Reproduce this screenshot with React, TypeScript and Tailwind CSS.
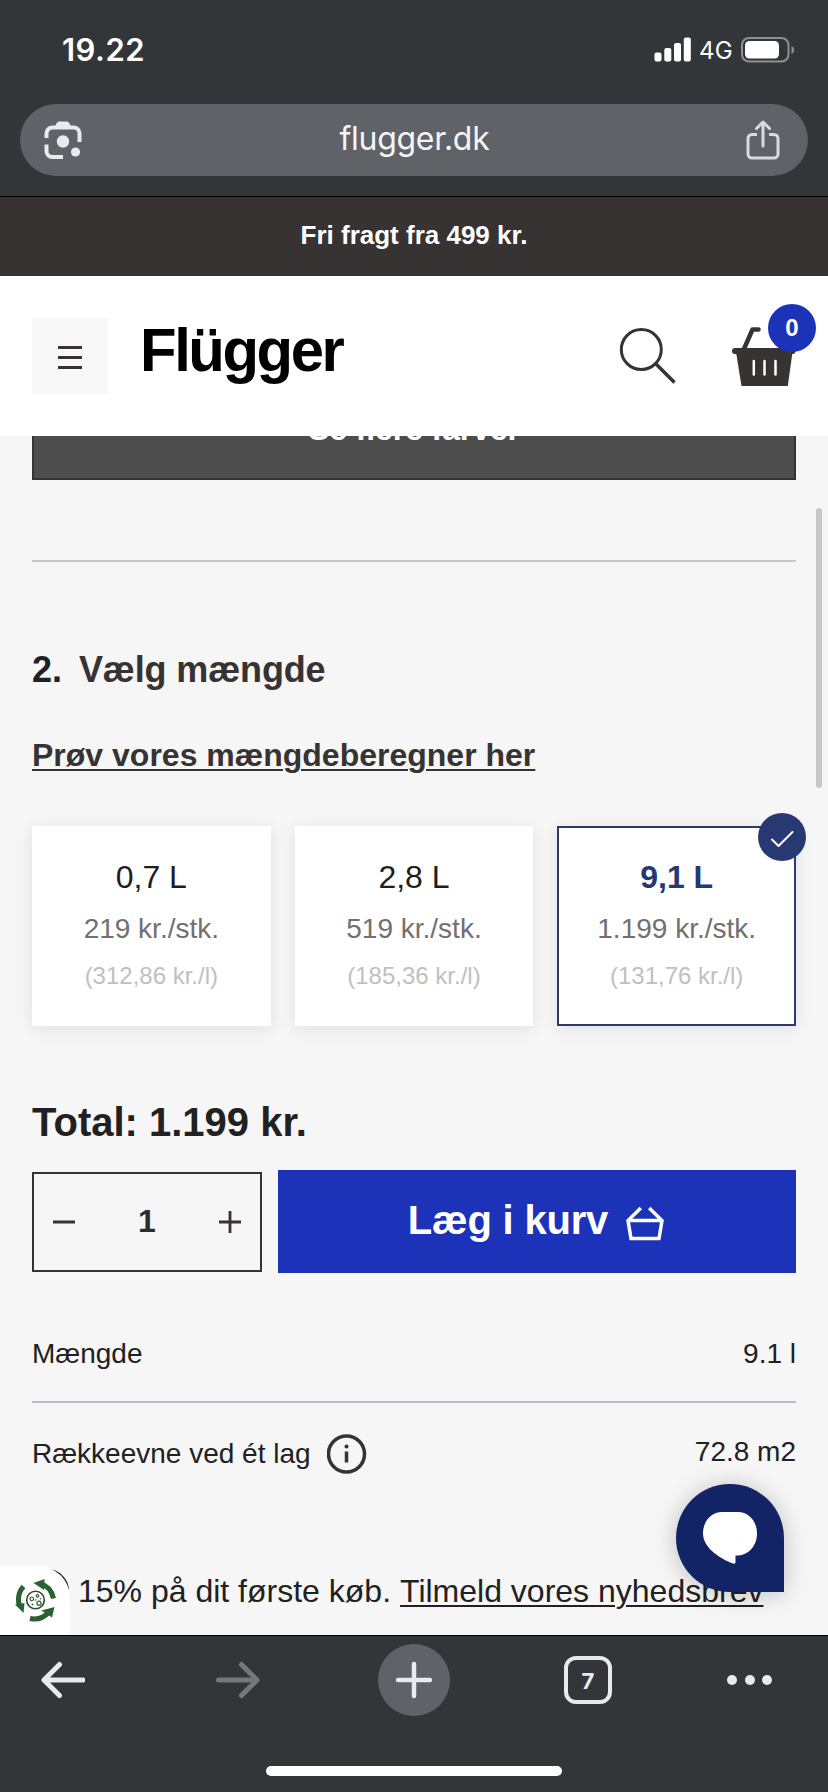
const helv = "font-['Liberation_Sans',Arial,sans-serif]";
const inter = "font-['Inter',sans-serif]";

function StatusBar() {
  return (
    <div className={`flex h-[100px] items-center justify-between pr-[33px] pl-[62px] text-white ${inter}`}>
      <span className="text-[31px] font-semibold tracking-[0.48px]">19.22</span>
      <div className="flex items-center">
        <svg width="38" height="26" viewBox="0 0 38 26" fill="currentColor">
          <rect x="0.5" y="15.5" width="7" height="9" rx="2" />
          <rect x="10.3" y="11" width="7" height="13.5" rx="2" />
          <rect x="20" y="6" width="7" height="18.5" rx="2" />
          <rect x="29.8" y="0.5" width="7" height="24" rx="2" />
        </svg>
        <span className="ml-[7px] pt-[2px] text-[24px] font-normal tracking-[0.35px]">4G</span>
        <svg className="ml-[8px]" width="54" height="26" viewBox="0 0 54 26">
          <rect x="1" y="1" width="46.5" height="23.5" rx="7" fill="none" stroke="#8d9092" strokeWidth="2" />
          <rect x="4" y="4" width="34" height="17.5" rx="4.5" fill="#fff" />
          <path d="M50.5 9c3.4 1.2 3.4 6.800 0 8z" fill="#8d9092" />
        </svg>
      </div>
    </div>
  );
}

function AddressBar() {
  return (
    <div className="mx-5 mt-[4px] flex h-[72px] items-center justify-between rounded-full bg-[#5f6368] pr-[27px] pl-[22px]">
      <svg width="42" height="42" viewBox="0 0 42 42" fill="none" stroke="#e8eaed" strokeWidth="4">
        <path d="M4.500 19v-4.500a6 6 0 0 1 6-6h21a6 6 0 0 1 6 6V23" />
        <path d="M4.500 25.500V32a6 6 0 0 0 6 6H21" />
        <path d="M12.500 8.500l2.200-4.500q.8-1.500 2.500-1.500h7.600q1.700 0 2.500 1.500l2.200 4.500z" fill="#e8eaed" stroke="none" />
        <circle cx="21" cy="22.500" r="6.200" fill="#e8eaed" stroke="none" />
        <circle cx="33.500" cy="33" r="4.600" fill="#e8eaed" stroke="none" />
      </svg>
      <span className={`pb-[2px] text-[32px] leading-[40px] tracking-[-0.3px] text-[#f4f5f6] ${inter}`}>flugger.dk</span>
      <svg width="36" height="42" viewBox="0 0 36 42" fill="none" stroke="#d9dbde" strokeWidth="3">
        <path d="M12 15.500H7a4 4 0 0 0-4 4V35a4 4 0 0 0 4 4h22a4 4 0 0 0 4-4V19.500a4 4 0 0 0-4-4h-5" />
        <path d="M18 27V3.500M11.500 9.500l6.500-6.500 6.500 6.500" strokeLinecap="round" strokeLinejoin="round" />
      </svg>
    </div>
  );
}

function SiteHeader() {
  return (
    <header className="flex h-[160px] shrink-0 items-center bg-white pl-8">
      <div className="flex size-[76px] items-center justify-center bg-[#f8f8f8] pt-[3px]">
        <div className="flex w-6 flex-col gap-[7px]">
          <div className="h-[3px] bg-[#373333]" />
          <div className="h-[3px] bg-[#373333]" />
          <div className="h-[3px] bg-[#373333]" />
        </div>
      </div>
      <div className="ml-[32px] w-[210px] origin-left scale-x-[0.965] pb-[12px] text-[62px] leading-[72px] font-bold tracking-[-2.5px] text-black">Flügger</div>
      <svg className="ml-[268px]" width="60" height="80" viewBox="0 0 60 80" fill="none" stroke="#373333">
        <circle cx="23.300" cy="33.500" r="20" strokeWidth="3" />
        <path d="M38 48L56.500 66.500" strokeWidth="3.500" />
      </svg>
      <div className="relative ml-[50px] h-[80px] w-[90px]">
        <svg width="72" height="80" viewBox="0 0 72 80" fill="none">
          <path d="M15.500 34l9-20.500H30.500" stroke="#373333" strokeWidth="4.500" strokeLinecap="round" strokeLinejoin="round" />
          <rect x="4" y="32" width="63.500" height="6" rx="3" fill="#373333" />
          <path d="M8 36h56.500L59.800 70H13.500z" fill="#373333" />
          <path d="M25.800 45v13.500M36.500 45v13.500M47.500 45v13.500" stroke="#fff" strokeWidth="2.500" strokeLinecap="round" />
        </svg>
        <div className="absolute top-[-12px] left-[40px] flex size-12 items-center justify-center rounded-full bg-[#1c32b9] text-[24px] font-bold text-white">0</div>
      </div>
    </header>
  );
}

const sizes = [
  { size: '0,7 L', price: '219 kr./stk.', unit: '(312,86 kr./l)', selected: false },
  { size: '2,8 L', price: '519 kr./stk.', unit: '(185,36 kr./l)', selected: false },
  { size: '9,1 L', price: '1.199 kr./stk.', unit: '(131,76 kr./l)', selected: true },
];

function SizeCards() {
  return (
    <div className="mt-[51px] grid grid-cols-3 gap-6">
      {sizes.map((s) => (
        <div
          key={s.size}
          className={`relative flex h-[200px] flex-col items-center bg-white pt-[31px] shadow-[0_3px_16px_rgba(0,0,0,0.09)] ${
            s.selected ? 'outline-2 -outline-offset-2 outline-[#2b3a6b]' : ''
          }`}
        >
          <div className={`text-[32px] leading-[40px] ${s.selected ? 'font-bold text-[#263774]' : 'text-[#1e1e1e]'}`}>{s.size}</div>
          <div className="mt-[16px] text-[28px] leading-8 text-[#727070]">{s.price}</div>
          <div className="mt-[15px] text-[24px] leading-8 text-[#c0c0c0]">{s.unit}</div>
          {s.selected && (
            <div className="absolute -top-[13px] -right-[10px] flex size-12 items-center justify-center rounded-full bg-[#283872]">
              <svg width="24" height="18" viewBox="0 0 24 18" className="mt-[4px]" fill="none" stroke="#fff" strokeWidth="2" strokeLinecap="round" strokeLinejoin="round">
                <path d="M2 9.500L8.500 16 22.500 2" />
              </svg>
            </div>
          )}
        </div>
      ))}
    </div>
  );
}

function BuyRow() {
  return (
    <div className="mt-6 flex h-[103px] items-center gap-4">
      <div className="flex h-[100px] w-[230px] items-center justify-between border-2 border-[#373333] px-[18px]">
        <svg width="24" height="24" stroke="#373333" strokeWidth="3"><path d="M1 12h22" /></svg>
        <span className="pb-[2px] text-[32px] font-bold text-[#2d2b2b]">1</span>
        <svg width="24" height="24" stroke="#373333" strokeWidth="2.800"><path d="M1 12h22M12 1v22" /></svg>
      </div>
      <button className="flex h-full flex-1 items-center justify-center bg-[#1c32b9] text-white">
        <span className="-mt-[3px] text-[40px] leading-[48px] font-bold tracking-[-0.2px]">Læg i kurv</span>
        <svg className="mr-[1px] ml-[17px]" width="40" height="40" viewBox="0 0 40 40" fill="none" stroke="#fff" strokeWidth="3.500">
          <path d="M15.800 6L3 18.500 6 36.500h28L37 18.500 24.200 6M3.500 18.500h33" />
        </svg>
      </button>
    </div>
  );
}

function CookieBadge() {
  return (
    <div className="absolute bottom-0 left-0 flex h-[69px] w-[70px] items-center justify-center rounded-tr-[32px] bg-white">
      <svg width="44" height="44" viewBox="0 0 44 44" className="mt-[1px] ml-[1px]" fill="none">
        <g stroke="#2a6330" strokeWidth="5">
          <path d="M26 4.500C33 6.500 38 12 39.500 19.500" />
          <path d="M9.500 7.500C4.500 13 3.200 19 5.500 27" />
          <path d="M16 39.500C23 41 30 38.500 34.500 33.500" />
        </g>
        <g fill="#2a6330">
          <path d="M19.500 4L30.500 0l-.5 11z" />
          <path d="M1 25.500L10.500 24 9.500 34z" />
          <path d="M27.500 31.500L40.500 28 38 38.500z" />
        </g>
        <circle cx="21.500" cy="21" r="8.800" stroke="#24502b" strokeWidth="1.600" />
        <g stroke="#3d5540" strokeWidth="1.200">
          <circle cx="17.800" cy="19.800" r="1.800" />
          <circle cx="23.500" cy="16.800" r="1.300" />
          <circle cx="25" cy="24.200" r="2" />
        </g>
        <g fill="#3d5540">
          <circle cx="18.500" cy="25.500" r="0.900" />
          <circle cx="21.500" cy="21" r="0.800" />
          <circle cx="26.500" cy="19.800" r="0.800" />
        </g>
      </svg>
    </div>
  );
}

function ProductPage() {
  return (
    <main className="relative flex h-[1199px] shrink-0 flex-col overflow-hidden bg-[#f6f6f6] px-8 text-[#212121]">
      <div className="-mt-[58px] flex h-[102px] shrink-0 items-center justify-center border-2 border-[#373333] bg-[#4d4d4d] text-[32px] font-bold tracking-[-0.1px] text-white">
        Se flere farver
      </div>
      <div className="mt-20 h-[2px] bg-[#c6c6c6]" />
      <h2 className="mt-[88px] flex text-[36px] leading-[40px] font-bold text-[#373333]">
        <span className="w-[47px] text-[#212121]">2.</span>
        <span className="tracking-[-0.14px]">Vælg mængde</span>
      </h2>
      <a className="mt-[45px] self-start text-[32px] leading-[40px] font-bold text-[#373333] underline decoration-2 underline-offset-[3px]">
        Prøv vores mængdeberegner her
      </a>
      <SizeCards />
      <div className="mt-[72px] text-[40px] leading-[48px] font-bold">Total: 1.199 kr.</div>
      <BuyRow />
      <div className="mt-[61px] flex justify-between text-[28px] leading-[40px]">
        <span>Mængde</span>
        <span>9.1 l</span>
      </div>
      <div className="mt-[27px] h-[2px] bg-[#b7bcc8]" />
      <div className="mt-[31px] flex justify-between text-[28px] leading-[40px]">
        <div className="flex items-center">
          <span>Rækkeevne ved ét lag</span>
          <svg className="ml-4" width="40" height="40" viewBox="0 0 40 40" fill="none">
            <circle cx="19.500" cy="20" r="18" stroke="#373333" strokeWidth="3.500" />
            <circle cx="19.500" cy="12.500" r="2" fill="#373333" />
            <path d="M19.500 17.500v11" stroke="#373333" strokeWidth="3.500" />
          </svg>
        </div>
        <span className="-mt-[2px]">72.8 m2</span>
      </div>
      <div className="mt-[97px] flex h-[40px] items-center text-[32px] leading-[40px] whitespace-nowrap">
        <div className="-ml-[7px] size-[44px] shrink-0 rounded-full border-2 border-[#212121]" />
        <span className="ml-[9px]">15% på dit første køb.</span>
        <a className="ml-[9px] underline decoration-2 underline-offset-[3px]">Tilmeld vores nyhedsbrev</a>
      </div>
      <div className="absolute top-[72px] right-[6px] h-[280px] w-[6px] rounded-full bg-[#c7c7c7]" />
      <div className="absolute top-[1048px] left-[676px] size-[108px] rounded-full rounded-br-[8px] bg-[#122366] shadow-[0_2px_24px_rgba(0,0,0,0.22)]">
        <svg width="108" height="108" viewBox="0 0 108 108" fill="#fff">
          <path d="M46 28h16c11 0 19 9.500 19 21.500S73 71 62 71.500h-2.500v6.500c0 1.500-1 2-2.500 1.500C47 76 27 65 27 49.500 27 37.500 35 28 46 28z" />
        </svg>
      </div>
      <CookieBadge />
    </main>
  );
}

function BottomBar() {
  return (
    <nav className="flex h-[157px] shrink-0 flex-col border-t border-black bg-[#333639] pt-[8px]">
      <div className="flex h-[72px] items-center pl-[41px]">
        <svg width="44" height="40" viewBox="0 0 44 40" fill="none" stroke="#e8eaed" strokeWidth="5" strokeLinecap="round" strokeLinejoin="round">
          <path d="M18.500 4.500L3 20l15.500 15.500M3 20h39" />
        </svg>
        <svg className="ml-[131px]" width="44" height="40" viewBox="0 0 44 40" fill="none" stroke="#77777a" strokeWidth="5" strokeLinecap="round" strokeLinejoin="round">
          <path d="M25.500 4.500L41 20 25.500 35.500M41 20H2.500" />
        </svg>
        <div className="ml-[118px] flex size-[72px] items-center justify-center rounded-full bg-[#5f6368]">
          <svg width="40" height="40" stroke="#e8eaed" strokeWidth="4.500" strokeLinecap="round"><path d="M4 20h32M20 4v32" /></svg>
        </div>
        <div className={`ml-[114px] flex size-12 items-center justify-center rounded-[12px] border-[4px] border-[#e8eaed] pt-[2px] text-[22px] font-bold text-[#e8eaed] ${inter}`}>7</div>
        <div className="ml-[115px] flex gap-[7.500px]">
          <div className="size-[10px] rounded-full bg-[#e8eaed]" />
          <div className="size-[10px] rounded-full bg-[#e8eaed]" />
          <div className="size-[10px] rounded-full bg-[#e8eaed]" />
        </div>
      </div>
      <div className="mt-[50px] ml-[266px] h-[10px] w-[296px] rounded-full bg-white" />
    </nav>
  );
}

export default function App() {
  return (
    <div className={`flex h-[1792px] w-[828px] flex-col overflow-hidden bg-[#f6f6f6] ${helv}`}>
      <div className="h-[197px] shrink-0 border-b border-black bg-[#333639]">
        <StatusBar />
        <AddressBar />
      </div>
      <div className="flex h-[79px] shrink-0 items-center justify-center bg-[#363332] pb-[2px] text-[26px] font-bold text-white">Fri fragt fra 499 kr.</div>
      <SiteHeader />
      <ProductPage />
      <BottomBar />
    </div>
  );
}
